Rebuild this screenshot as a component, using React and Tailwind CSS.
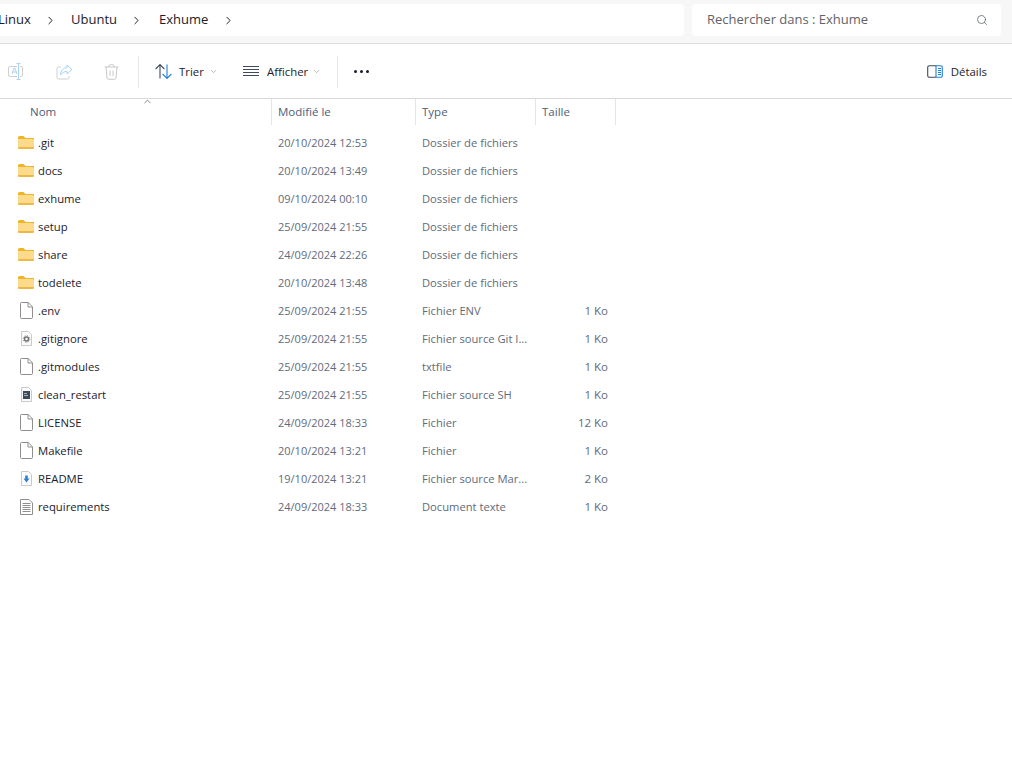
import React from "react";
import { ChevronRight, ChevronDown, ChevronUp, Search } from "lucide-react";

const font = "font-['Open_Sans','Noto_Sans',sans-serif]";

const Folder = () => (
  <svg width="16" height="13" viewBox="0 0 16 13" className="block -mt-[2px]">
    <path d="M0 1.500A1.500 1.500 0 0 1 1.500 0h4L7.500 2H16v2H0z" fill="#f0b429" />
    <path d="M0 3h14.500A1.500 1.500 0 0 1 16 4.500v7a1.500 1.500 0 0 1-1.500 1.500h-13A1.500 1.500 0 0 1 0 11.500z" fill="#fcdc8c" />
    <path d="M0 11h16v.5a1.500 1.500 0 0 1-1.500 1.500h-13A1.500 1.500 0 0 1 0 11.500z" fill="#efb844" />
  </svg>
);
const Page = () => (
  <svg width="13" height="17" viewBox="0 0 13 17" className="block ml-[2px] -mt-px">
    <path d="M1.500.5h6.700l4.300 4.300v10.700a1 1 0 0 1-1 1h-10a1 1 0 0 1-1-1V1.500a1 1 0 0 1 1-1z" fill="#fff" stroke="#8f8f8f" />
    <path d="M8 .5v4.500h4.500" fill="none" stroke="#8f8f8f" />
  </svg>
);
const SmallPage = ({ children }) => (
  <svg width="11" height="15" viewBox="0 0 11 15" className="block ml-[3px] -mt-px">
    <path d="M.5.5h7l3 3v11H.5z" fill="#fbfbfb" stroke="#c9c9c9" />
    {children}
  </svg>
);
const Gear = () => (
  <SmallPage>
    <circle cx="5.500" cy="8" r="2" fill="none" stroke="#6f6f6f" strokeWidth="1.400" />
    <circle cx="5.500" cy="8" r="3.300" fill="none" stroke="#8a8a8a" strokeWidth="1" strokeDasharray="1.300 1.300" />
  </SmallPage>
);
const Shell = () => (
  <SmallPage>
    <rect x="2" y="4" width="7" height="8" fill="#3c4a5e" />
    <path d="M3 6.500h3M3 8.500h4" stroke="#aab4c0" strokeWidth="1" />
  </SmallPage>
);
const Markdown = () => (
  <SmallPage>
    <path d="M4.200 4.500h2.600v3h1.700L5.500 11.500 2.500 7.500h1.700z" fill="#2f7fd0" />
  </SmallPage>
);
const TextDoc = () => (
  <svg width="13" height="16" viewBox="0 0 13 16" className="block ml-[2px] -mt-px">
    <path d="M.5.500h8.500l3.500 3.500v11.500H.5z" fill="#fff" stroke="#8f8f8f" />
    <path d="M2.500 4.500h8M2.500 6.500h8M2.500 8.500h8M2.500 10.500h8M2.500 12.500h8" stroke="#8f8f8f" strokeWidth="1" />
  </svg>
);

const iconFor = { folder: <Folder />, file: <Page />, gear: <Gear />, shell: <Shell />, md: <Markdown />, text: <TextDoc /> };

const rows = [
  ["folder", ".git", "20/10/2024 12:53", "Dossier de fichiers", ""],
  ["folder", "docs", "20/10/2024 13:49", "Dossier de fichiers", ""],
  ["folder", "exhume", "09/10/2024 00:10", "Dossier de fichiers", ""],
  ["folder", "setup", "25/09/2024 21:55", "Dossier de fichiers", ""],
  ["folder", "share", "24/09/2024 22:26", "Dossier de fichiers", ""],
  ["folder", "todelete", "20/10/2024 13:48", "Dossier de fichiers", ""],
  ["file", ".env", "25/09/2024 21:55", "Fichier ENV", "1 Ko"],
  ["gear", ".gitignore", "25/09/2024 21:55", "Fichier source Git I...", "1 Ko"],
  ["file", ".gitmodules", "25/09/2024 21:55", "txtfile", "1 Ko"],
  ["shell", "clean_restart", "25/09/2024 21:55", "Fichier source SH", "1 Ko"],
  ["file", "LICENSE", "24/09/2024 18:33", "Fichier", "12 Ko"],
  ["file", "Makefile", "20/10/2024 13:21", "Fichier", "1 Ko"],
  ["md", "README", "19/10/2024 13:21", "Fichier source Mar...", "2 Ko"],
  ["text", "requirements", "24/09/2024 18:33", "Document texte", "1 Ko"],
];

const Crumb = ({ children, className, gap }) => (
  <div className={`flex items-center ${className}`}>
    <span className="text-[13px] text-[#1b1b2b]">{children}</span>
    <ChevronRight size={13} strokeWidth={1.800} className={`${gap} text-[#1b1b2b]`} />
  </div>
);

const RenameIcon = () => (
  <svg width="18" height="18" viewBox="0 0 18 18" fill="none" className="block">
    <path d="M10 3.500H3a1.500 1.500 0 0 0-1.500 1.500v7A1.500 1.500 0 0 0 3 13.500h7M13 3.500h1A1.500 1.500 0 0 1 15.500 5v7a1.500 1.500 0 0 1-1.500 1.500h-1" stroke="#cfcfcf" />
    <path d="M5 11l2.200-6h.6L10 11M5.800 9h3.400" stroke="#a9d2f5" />
    <path d="M9.500.500h4M9.500 16.500h4M11.500.500v16" stroke="#a9d2f5" />
  </svg>
);
const ShareIcon = () => (
  <svg width="17" height="16" viewBox="0 0 17 16" fill="none" className="block">
    <path d="M5 3H2.500A1.500 1.500 0 0 0 1 4.500v9A1.500 1.500 0 0 0 2.500 15h9a1.500 1.500 0 0 0 1.500-1.500V12" stroke="#cfcfcf" />
    <path d="M11 1l5 4.500-5 4.500V7.500C8 7.500 6 8.500 4.500 11 4.500 7 7 4 11 3.500z" stroke="#a9d2f5" />
  </svg>
);
const TrashIcon = () => (
  <svg width="15" height="16" viewBox="0 0 15 16" fill="none" stroke="#c9c9c9" className="block">
    <path d="M.5 3h14M5 3V2a1.300 1.300 0 0 1 1.300-1.300h2.400A1.300 1.300 0 0 1 10 2v1M2 3l1 11a1.500 1.500 0 0 0 1.500 1.300h6A1.500 1.500 0 0 0 12 14l1-11M6 6.500v5.500M9 6.500v5.500" />
  </svg>
);
const SortIcon = () => (
  <svg width="17" height="15" viewBox="0 0 17 15" fill="none" className="block">
    <path d="M5 14.500V.8M.6 5L5 .6 9.400 5" stroke="#3f4a5a" strokeWidth="1.100" />
    <path d="M12 .5v13.700M7.600 10l4.400 4.400 4.400-4.400" stroke="#1f7fd6" strokeWidth="1.100" />
  </svg>
);
const ViewIcon = () => (
  <svg width="16" height="11" viewBox="0 0 16 11" className="block">
    <path d="M0 .5h16M0 3.500h16M0 6.500h16M0 9.500h16" stroke="#3f4a5a" strokeWidth="1" />
  </svg>
);
const DetailsIcon = () => (
  <svg width="16" height="13" viewBox="0 0 16 13" fill="none" className="block">
    <path d="M9 .7H2.500A1.800 1.800 0 0 0 .7 2.500v8a1.800 1.800 0 0 0 1.800 1.800H9" stroke="#3f4a5a" strokeWidth="1.100" />
    <path d="M9 .7h4.500a1.800 1.800 0 0 1 1.800 1.800v8a1.800 1.800 0 0 1-1.800 1.800H9z" stroke="#1f7fd6" strokeWidth="1.100" />
    <path d="M11 3.500h3M11 5.500h3M11 7.500h3M11 9.500h3" stroke="#1f7fd6" strokeWidth="1" />
  </svg>
);

const Sep = () => <div className="w-px h-[32px] bg-[#e8e8e8]" />;

const Head = ({ children, className }) => (
  <div className={`h-[26px] flex items-center pl-[6px] border-r border-[#e5e5e5] text-[11.500px] text-[#4c607a] ${className}`}>
    {children}
  </div>
);

export default function App() {
  return (
    <div className={`${font} w-[1012px] h-[766px] bg-white overflow-hidden`}>
      <div className="h-[44px] bg-[#f7f7f7] border-b border-[#dcdcdc] pt-[4px] flex gap-[8px]">
        <div className="w-[684px] h-[32px] bg-white rounded-r-[4px] overflow-hidden flex items-center">
          <Crumb className="ml-[-2px] w-[73px]" gap="ml-[13px]">Linux</Crumb>
          <Crumb className="w-[88px]" gap="ml-[13px]">Ubuntu</Crumb>
          <Crumb gap="ml-[14px]">Exhume</Crumb>
        </div>
        <div className="w-[309px] h-[32px] bg-white rounded-[4px] flex items-center justify-between pl-[15px] pr-[13px]">
          <span className="text-[13px] text-[#5f6368]">Rechercher dans : Exhume</span>
          <Search size={12} strokeWidth={1.500} className="text-[#555b66]" />
        </div>
      </div>

      <div className="h-[55px] border-b border-[#d9d9d9] flex items-center pt-px text-[11.400px] text-[#1b1b2b]">
        <div className="ml-[7px] w-[40px]"><RenameIcon /></div>
        <div className="ml-[9px] w-[40px]"><ShareIcon /></div>
        <div className="ml-[8px] w-[34px]"><TrashIcon /></div>
        <Sep />
        <div className="ml-[16px] flex items-center w-[88px]">
          <SortIcon />
          <span className="ml-[7px]">Trier</span>
          <ChevronDown size={9} strokeWidth={1.500} className="ml-[5px] text-[#8a8a8a]" />
        </div>
        <div className="flex items-center w-[94px]">
          <ViewIcon />
          <span className="ml-[8px]">Afficher</span>
          <ChevronDown size={9} strokeWidth={1.500} className="ml-[4px] text-[#8a8a8a]" />
        </div>
        <Sep />
        <div className="ml-[16px] flex gap-[3px]">
          <span className="w-[3px] h-[3px] rounded-full bg-[#1b1b2b]" />
          <span className="w-[3px] h-[3px] rounded-full bg-[#1b1b2b]" />
          <span className="w-[3px] h-[3px] rounded-full bg-[#1b1b2b]" />
        </div>
        <div className="ml-auto mr-[25px] flex items-center">
          <DetailsIcon />
          <span className="ml-[8px]">Détails</span>
        </div>
      </div>

      <div className="relative flex">
        <ChevronUp size={11} strokeWidth={1.500} className="absolute left-[142px] top-[-3px] text-[#555]" />
        <Head className="w-[272px] pl-[30px]">Nom</Head>
        <Head className="w-[144px]">Modifié le</Head>
        <Head className="w-[120px]">Type</Head>
        <Head className="w-[80px]">Taille</Head>
      </div>

      <div className="mt-[4px] flex flex-col">
        {rows.map(([icon, name, date, type, size]) => (
          <div key={name} className="h-[28px] flex items-center">
            <div className="w-[272px] flex items-center">
              <div className="ml-[18px] w-[20px] flex">{iconFor[icon]}</div>
              <span className="text-[11.300px] text-[#1b1b2b]">{name}</span>
            </div>
            <div className="w-[144px] pl-[6px] text-[11px] text-[#5f6b7a]">{date}</div>
            <div className="w-[120px] pl-[6px] text-[11.200px] text-[#5f6b7a]">{type}</div>
            <div className="w-[72px] text-right text-[11.500px] text-[#5f6b7a]">{size}</div>
          </div>
        ))}
      </div>
    </div>
  );
}
